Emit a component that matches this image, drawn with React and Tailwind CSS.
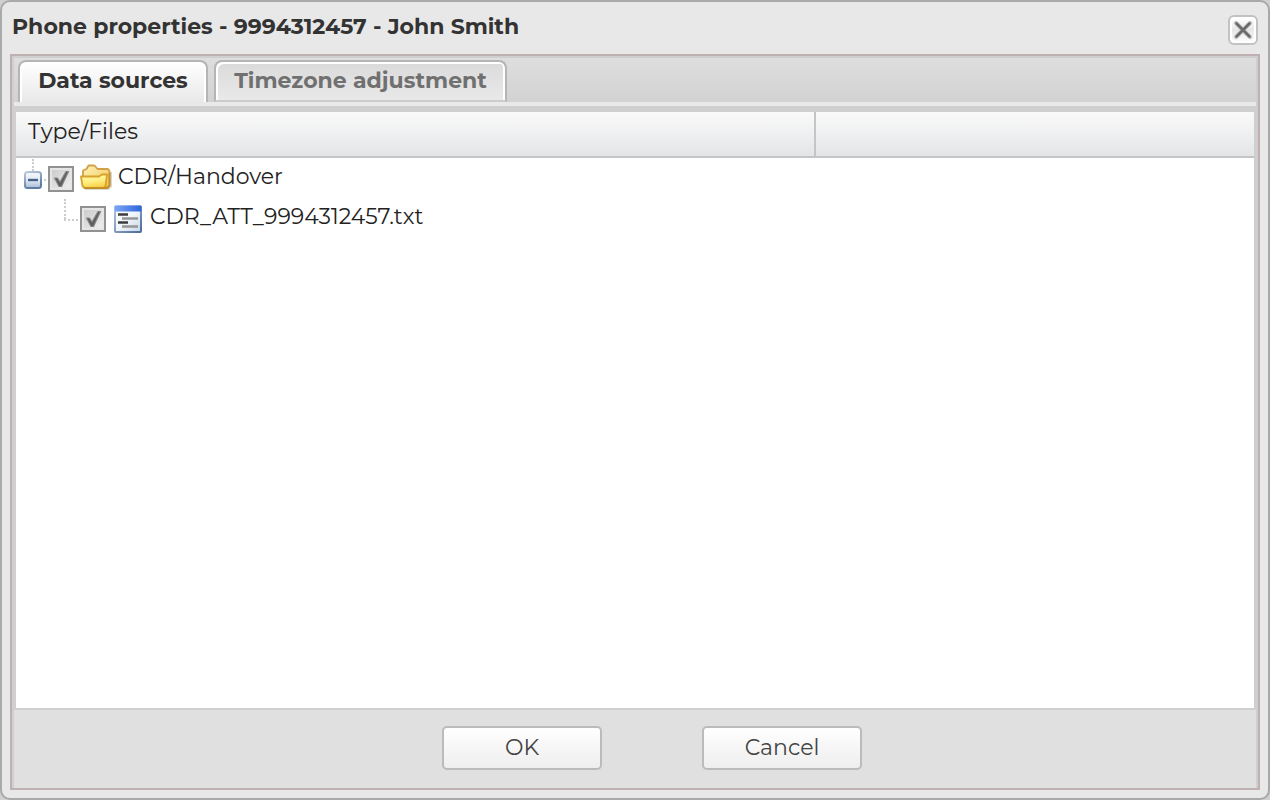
import { useState } from "react";

function CloseIcon() {
  return (
    <svg viewBox="0 0 30 30" className="size-[30px]" aria-hidden="true">
      <defs>
        <linearGradient id="close-face" x1="0" y1="0" x2="0" y2="1">
          <stop offset="0" stopColor="#ffffff" />
          <stop offset="0.5" stopColor="#e6e6e6" />
          <stop offset="1" stopColor="#fbfbfb" />
        </linearGradient>
      </defs>
      <rect x="1" y="1" width="28" height="28" rx="5" fill="#ffffff" stroke="#c2c2c2" strokeWidth="2" />
      <rect x="4" y="4" width="22" height="22" rx="2" fill="url(#close-face)" />
      <path d="M8 8 22 22M22 8 8 22" stroke="#a5a5a5" strokeWidth="4.4" strokeLinecap="round" opacity="0.6" />
      <path d="M8.500 8.500 21.500 21.500M21.500 8.500 8.500 21.500" stroke="#6a6a6a" strokeWidth="2.6" strokeLinecap="round" />
    </svg>
  );
}

function CollapseIcon({ open }) {
  return (
    <svg viewBox="0 0 18 18" className="size-[18px]" aria-hidden="true">
      <defs>
        <linearGradient id="toggle-face" x1="0" y1="0" x2="0" y2="1">
          <stop offset="0" stopColor="#f6f9fd" />
          <stop offset="0.5" stopColor="#e3eaf3" />
          <stop offset="1" stopColor="#a9bdd6" />
        </linearGradient>
        <linearGradient id="toggle-edge" x1="0" y1="0" x2="0.4" y2="1">
          <stop offset="0" stopColor="#bccbdd" />
          <stop offset="1" stopColor="#5c7aa3" />
        </linearGradient>
      </defs>
      <rect x="1" y="1" width="16" height="16" rx="2.5" fill="url(#toggle-face)" stroke="url(#toggle-edge)" strokeWidth="2" />
      <path d="M4 9h10" stroke="#45628a" strokeWidth="2.4" />
      {!open && <path d="M9 4v10" stroke="#45628a" strokeWidth="2.4" />}
    </svg>
  );
}

function FolderIcon() {
  return (
    <svg viewBox="0 0 32 26" className="h-[26px] w-8 shrink-0" aria-hidden="true">
      <defs>
        <linearGradient id="folder-back" x1="0" y1="0" x2="1" y2="1">
          <stop offset="0" stopColor="#fff3bd" />
          <stop offset="1" stopColor="#f0c44c" />
        </linearGradient>
        <linearGradient id="folder-front" x1="0" y1="0" x2="0.3" y2="1">
          <stop offset="0" stopColor="#fffbb4" />
          <stop offset="0.6" stopColor="#ffee80" />
          <stop offset="1" stopColor="#f8d24a" />
        </linearGradient>
      </defs>
      <path d="M5 25h23.500l2.500-2.500V8" fill="none" stroke="#a39a80" strokeWidth="1.6" opacity="0.5" />
      <path d="M3 22V6.500L6.500 5 8.500 1.500h6L17.500 5h10.500l1.500 2v14.500l-2 2H4.500z" fill="url(#folder-back)" stroke="#d2a047" strokeWidth="1.8" strokeLinejoin="round" />
      <path d="M1 12.500h18l3-2h5l-1.500 11.500-2 2H4.500L2.500 22z" fill="url(#folder-front)" stroke="#d8a22c" strokeWidth="1.8" strokeLinejoin="round" />
      <path d="M4.500 24h23l2-2.500V9" fill="none" stroke="#c38f2a" strokeWidth="1.8" strokeLinejoin="round" />
    </svg>
  );
}

function FileIcon() {
  return (
    <svg viewBox="0 0 28 28" className="size-7 shrink-0" aria-hidden="true">
      <defs>
        <linearGradient id="file-body" x1="0" y1="0" x2="1" y2="1">
          <stop offset="0" stopColor="#ffffff" />
          <stop offset="0.5" stopColor="#f2f6fb" />
          <stop offset="1" stopColor="#c3d5ea" />
        </linearGradient>
        <linearGradient id="file-bar" x1="0" y1="0" x2="1" y2="0">
          <stop offset="0" stopColor="#7da6f7" />
          <stop offset="1" stopColor="#2e65dc" />
        </linearGradient>
        <linearGradient id="file-edge" x1="0" y1="0" x2="1" y2="1">
          <stop offset="0" stopColor="#b5c8e2" />
          <stop offset="1" stopColor="#4d6c96" />
        </linearGradient>
      </defs>
      <rect x="1" y="1.5" width="26" height="25.5" rx="1" fill="url(#file-body)" stroke="url(#file-edge)" strokeWidth="2" />
      <rect x="0.5" y="0.5" width="27" height="6" rx="1" fill="url(#file-bar)" />
      <path d="M4 9.500h10M4 17.500h10" stroke="#3c3c3c" strokeWidth="2.6" />
      <path d="M8 13.500h16M8 21.500h16" stroke="#969696" strokeWidth="2.4" />
    </svg>
  );
}

function CheckBox({ id, checked, onChange }) {
  return (
    <span className="grid size-[26px] shrink-0">
      <input
        id={id}
        type="checkbox"
        checked={checked}
        onChange={onChange}
        className="col-start-1 row-start-1 size-[26px] appearance-none border-2 border-[#929292] bg-linear-to-br from-[#c8c8c8] to-[#f2f2f2] shadow-[inset_0_0_0_2px_#e6e6e6]"
      />
      {checked && (
        <svg viewBox="0 0 26 26" className="pointer-events-none col-start-1 row-start-1 size-[26px]" aria-hidden="true">
          <path d="M6.500 12 9.500 12 12 16 18 5.500 20.500 5.500 13.500 20.500 11 20.500z" fill="#5c5c5c" stroke="#858585" strokeWidth="1.2" strokeLinejoin="round" />
        </svg>
      )}
    </span>
  );
}

const dialogButton =
  "h-11 w-40 rounded-[5px] border-2 border-[#bbbbbb] bg-linear-to-b from-white to-[#eeeeee] text-[22px] leading-7 font-normal text-[#444444]";

export default function App() {
  const [tab, setTab] = useState("sources");
  const [open, setOpen] = useState(true);
  const [checks, setChecks] = useState({ group: true, file: true });
  const toggle = (key) => setChecks({ ...checks, [key]: !checks[key] });

  return (
    <div className="flex min-h-screen bg-[#d0d0d0] font-['Montserrat','Inter',sans-serif]">
      <main className="flex flex-1 flex-col rounded-[10px] border-2 border-[#a9a9a9] bg-[#e8e8e8] px-2 pb-2">
        <header className="flex h-[52px] items-start justify-between px-0.5">
          <h1 className="pt-[9px] text-[22px] leading-8 font-bold text-[#333333]">
            Phone properties - 9994312457 - John Smith
          </h1>
          <button type="button" aria-label="Close" className="mt-[13px]">
            <CloseIcon />
          </button>
        </header>

        <div className="flex flex-1 flex-col border-2 border-[#bfb1b1]">
          <div className="flex flex-1 flex-col border-x-2 border-t-2 border-[#cfcfcf] bg-[#e0e0e0]">
            <div role="tablist" className="flex h-11 items-stretch gap-1.5 bg-linear-to-b from-[#dedede] to-[#d2d2d2] px-1 pt-0.5">
              <button
                type="button"
                role="tab"
                aria-selected={tab === "sources"}
                onClick={() => setTab("sources")}
                className="w-[190px] rounded-t-lg border-2 border-b-0 border-[#b5b5b5] bg-linear-to-b from-white to-[#e9e9e9] pb-0.5 text-[22px] leading-7 font-bold whitespace-nowrap text-[#333333] shadow-[inset_2px_2px_0_#ffffff,inset_-2px_0_0_#ffffff]"
              >
                Data sources
              </button>
              <button
                type="button"
                role="tab"
                aria-selected={tab === "timezone"}
                onClick={() => setTab("timezone")}
                className="w-[293px] rounded-t-lg border-2 border-[#b5b5b5] border-b-[#cccccc] bg-linear-to-b from-[#dadada] to-[#e9e9e9] text-[22px] leading-7 font-bold whitespace-nowrap text-[#707070] shadow-[inset_2px_2px_0_#ffffff,inset_-2px_0_0_#ffffff]"
              >
                Timezone adjustment
              </button>
            </div>
            <div className="h-1 bg-[#e9e9e9]" />

            <div className="flex-1 border-x-2 border-t-[6px] border-b-2 border-[#cfcfcf] bg-white">
              <table className="w-full table-fixed border-separate border-spacing-0 text-left text-[22px] leading-7 font-normal text-[#222222]">
                <colgroup>
                  <col className="w-[800px]" />
                  <col />
                </colgroup>
                <thead>
                  <tr className="h-[46px] bg-linear-to-b from-[#fafafa] to-[#e2e4e6]">
                    <th scope="col" className="border-r-2 border-b-2 border-[#c5c5c5] px-3 pb-1 font-normal">
                      Type/Files
                    </th>
                    <th scope="col" aria-label="Details" className="border-b-2 border-[#c5c5c5]" />
                  </tr>
                </thead>
                <tbody>
                  <tr>
                    <td className="p-0">
                      <div className="flex h-10 items-center pt-0.5 pl-2">
                        <div className="-mt-0.5 flex h-full w-6 flex-col">
                          <span className="ml-2 h-3 w-0 border-l-2 border-dotted border-[#cccccc]" />
                          <div className="flex items-center gap-0.5">
                            <button type="button" aria-label="Toggle CDR/Handover" aria-expanded={open} onClick={() => setOpen(!open)}>
                              <CollapseIcon open={open} />
                            </button>
                            <span className="w-0.5 border-t-2 border-dotted border-[#cccccc]" />
                          </div>
                        </div>
                        <CheckBox id="group" checked={checks.group} onChange={() => toggle("group")} />
                        <span className="ml-1.5 pb-1">
                          <FolderIcon />
                        </span>
                        <label htmlFor="group" className="ml-1.5 pb-1">
                          CDR/Handover
                        </label>
                      </div>
                    </td>
                    <td />
                  </tr>
                  {open && (
                    <tr>
                      <td className="p-0">
                        <div className="flex h-10 items-center pt-0.5 pl-12">
                          <div className="-mt-0.5 h-full w-4">
                            <span className="block h-5 w-0 border-l-2 border-dotted border-[#cccccc]" />
                            <span className="block w-3.5 border-t-2 border-dotted border-[#cccccc]" />
                          </div>
                          <CheckBox id="file" checked={checks.file} onChange={() => toggle("file")} />
                          <span className="ml-2">
                            <FileIcon />
                          </span>
                          <label htmlFor="file" className="ml-2 pb-1">
                            CDR_ATT_9994312457.txt
                          </label>
                        </div>
                      </td>
                      <td />
                    </tr>
                  )}
                </tbody>
              </table>
            </div>

            <footer className="flex h-[78px] items-start justify-center gap-[100px] pt-4 pl-[34px]">
              <button type="button" className={dialogButton}>
                OK
              </button>
              <button type="button" className={dialogButton}>
                Cancel
              </button>
            </footer>
          </div>
        </div>
      </main>
    </div>
  );
}
